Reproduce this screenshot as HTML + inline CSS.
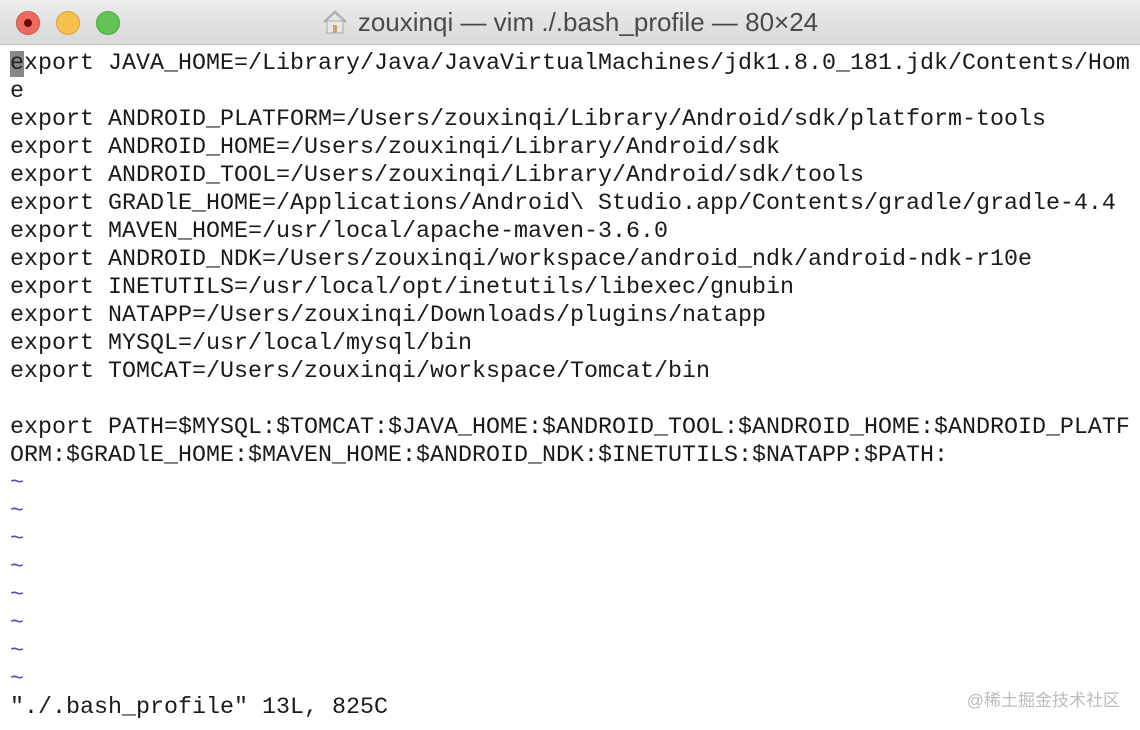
<!DOCTYPE html>
<html><head><meta charset="utf-8"><style>
*{margin:0;padding:0}
body{width:1140px;height:730px;overflow:hidden;background:#fff;position:relative;font-family:"Liberation Sans",sans-serif}
.tb{position:absolute;left:0;top:0;width:1140px;height:44px;background:linear-gradient(#ececec,#d9d9d9);border-bottom:1px solid #c4c4c4}
.dot{position:absolute;top:11px;width:24px;height:24px;border-radius:50%}
.t{position:absolute;left:0;right:0;top:7px;text-align:center;font-size:26px;color:#4a4a4a}
pre{position:absolute;left:10px;top:50px;font-family:"Liberation Mono",monospace;font-size:23.33px;line-height:28px;color:#1a1a1a}
.c{background:#888;color:#222}
.tl{color:#4b4bb0}
.wm{position:absolute;right:20px;top:686px;font-size:17px;color:#bbb;font-family:"Liberation Sans","Noto Sans CJK SC",sans-serif}
</style></head><body>
<div class="tb">
<div class="dot" style="left:16px;background:#ed6a5e;border:1px solid #d0524a;width:22px;height:22px"><div style="position:absolute;left:7px;top:7px;width:8px;height:8px;border-radius:50%;background:#6e0b05"></div></div>
<div class="dot" style="left:56px;background:#f6c04f;border:1px solid #dca23a;width:22px;height:22px"></div>
<div class="dot" style="left:96px;background:#61c454;border:1px solid #4ba83e;width:22px;height:22px"></div>
<div class="t"><span style="display:inline-block;width:26px;height:22px;vertical-align:-3px;margin-right:10px;position:relative"><svg width="26" height="24" viewBox="0 0 26 24"><path d="M2 12 L13 2 L24 12" fill="none" stroke="#b0b0b0" stroke-width="2.5"/><rect x="5" y="11" width="16" height="12" fill="#e8e8e8" stroke="#aaa"/><rect x="11" y="15" width="4" height="8" fill="#c9a36a"/></svg></span>zouxinqi — vim ./.bash_profile — 80×24</div>
</div>
<pre><span class="c">e</span>xport JAVA_HOME=/Library/Java/JavaVirtualMachines/jdk1.8.0_181.jdk/Contents/Hom
e
export ANDROID_PLATFORM=/Users/zouxinqi/Library/Android/sdk/platform-tools
export ANDROID_HOME=/Users/zouxinqi/Library/Android/sdk
export ANDROID_TOOL=/Users/zouxinqi/Library/Android/sdk/tools
export GRADlE_HOME=/Applications/Android\ Studio.app/Contents/gradle/gradle-4.4
export MAVEN_HOME=/usr/local/apache-maven-3.6.0
export ANDROID_NDK=/Users/zouxinqi/workspace/android_ndk/android-ndk-r10e
export INETUTILS=/usr/local/opt/inetutils/libexec/gnubin
export NATAPP=/Users/zouxinqi/Downloads/plugins/natapp
export MYSQL=/usr/local/mysql/bin
export TOMCAT=/Users/zouxinqi/workspace/Tomcat/bin

export PATH=$MYSQL:$TOMCAT:$JAVA_HOME:$ANDROID_TOOL:$ANDROID_HOME:$ANDROID_PLATF
ORM:$GRADlE_HOME:$MAVEN_HOME:$ANDROID_NDK:$INETUTILS:$NATAPP:$PATH:
<span class="tl">~
~
~
~
~
~
~
~</span>
"./.bash_profile" 13L, 825C</pre>
<div class="wm">@稀土掘金技术社区</div>
</body></html>
